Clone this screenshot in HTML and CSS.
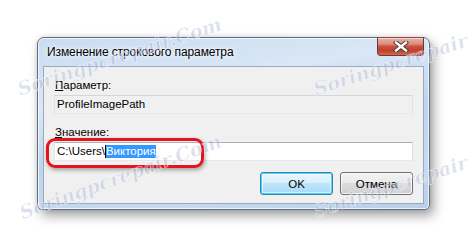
FILE: index.html
```html
<!DOCTYPE html>
<html lang="ru">
<head>
  <meta charset="UTF-8" />
  <title>Изменение строкового параметра</title>
  <link rel="stylesheet" href="styles.css">
</head>
<body>
  <div class="stage">
    <!-- Dialog window -->
    <div class="window">
      <div class="titlebar">
        <span class="title">Изменение строкового параметра</span>
        <div class="close">
          <svg width="16" height="11" viewBox="0 0 16 11">
            <path d="M3 1.5 L13 9.5 M13 1.5 L3 9.5" stroke="#3a3a3a" stroke-width="4.2" stroke-linecap="square"/>
            <path d="M3 1.5 L13 9.5 M13 1.5 L3 9.5" stroke="#ffffff" stroke-width="2.4" stroke-linecap="square"/>
          </svg>
        </div>
      </div>

      <div class="client">
        <div class="label"><u>П</u>араметр:</div>
        <div class="field readonly">ProfileImagePath</div>
        <div class="label second"><u>З</u>начение:</div>
        <div class="field">C:\Users\<span class="caret"></span><span class="sel">Виктория</span></div>
        <div class="buttons">
          <button class="btn default">OK</button>
          <button class="btn">Отмена</button>
        </div>
      </div>
    </div>

    <!-- Annotation -->
    <div class="highlight"></div>

    <!-- Watermarks -->
    <span class="wm wm1">Soringpcrepair.Com</span>
    <span class="wm wm2">Soringpcrepair.c</span>
    <span class="wm wm3">Soringpcrepair.Com</span>
    <span class="wm wm4">Soringpcrepair.c</span>
  </div>
</body>
</html>
```

FILE: styles.css
```css
html, body {
  margin: 0;
  padding: 0;
  background: #ffffff;
  font-family: 'Liberation Sans', Arial, sans-serif;
  color: #000;
}

.stage {
  position: relative;
  width: 468px;
  height: 249px;
  padding: 37px 0 0 37px;
  box-sizing: border-box;
  overflow: hidden;
}

.window {
  width: 393px;
  height: 173px;
  box-sizing: border-box;
  border: 1px solid #5e6f82;
  border-radius: 7px 7px 5px 5px;
  background: linear-gradient(170deg, #c9dcf1 0%, #d9e7f6 30%, #bfd4ec 55%, #c7daef 80%, #b9cfe8 100%);
  box-shadow: inset 0 0 0 1px rgba(255, 255, 255, 0.7), 4px 6px 12px rgba(0, 0, 0, 0.35), 0 0 5px rgba(0, 0, 0, 0.15);
  display: flex;
  flex-direction: column;
}

.titlebar {
  height: 28px;
  display: flex;
  align-items: center;
  padding-left: 9px;
}

.title {
  font-size: 12px;
  text-shadow: 0 0 6px #fff, 0 0 3px #fff;
  letter-spacing: -0.1px;
}

.close {
  margin-left: auto;
  margin-right: 5px;
  align-self: flex-start;
  margin-top: -1px;
  width: 47px;
  height: 19px;
  box-sizing: border-box;
  border: 1px solid #6b3a34;
  border-top-color: #8a4d45;
  border-radius: 0 0 4px 4px;
  background: linear-gradient(to bottom, #eab2a6 0%, #dd8d7e 35%, #c9503d 50%, #c03f2c 75%, #d26a4c 100%);
  box-shadow: inset 0 1px 0 rgba(255, 255, 255, 0.5);
  display: flex;
  align-items: center;
  justify-content: center;
}

.close svg {
  display: block;
}

.client {
  flex: 1;
  margin: 0 5px 5px 5px;
  border: 1px solid #96abc3;
  background: #f0f0f0;
  padding: 11px 10px 0 10px;
  font-size: 11.5px;
}

.label {
  height: 14px;
  line-height: 14px;
  margin-bottom: 3px;
  padding-left: 1px;
}

.label.second {
  margin-top: 11px;
}

.field {
  height: 19px;
  box-sizing: border-box;
  border: 1px solid #abadb3;
  border-color: #abadb3 #dbdfe6 #e3e9ef #e2e3ea;
  background: #ffffff;
  padding-left: 2px;
  line-height: 17px;
  display: flex;
  align-items: center;
  white-space: pre;
}

.field.readonly {
  background: #f0f0f0;
  border-color: #d3d6da #e0e3e6 #e6e8eb #e0e3e6;
}

.caret {
  width: 1px;
  height: 13px;
  background: #000;
}

.sel {
  background: #3399ff;
  color: #fff;
  line-height: 13px;
}

.buttons {
  margin-top: 11px;
  display: flex;
  justify-content: flex-end;
  gap: 7px;
}

.btn {
  width: 73px;
  height: 23px;
  margin: 0;
  padding: 0;
  font-family: inherit;
  font-size: 11.5px;
  color: #000;
  border: 1px solid #707070;
  border-radius: 3px;
  background: linear-gradient(to bottom, #f2f2f2 0%, #ebebeb 45%, #dddddd 50%, #cfcfcf 100%);
  box-shadow: inset 0 0 0 1px rgba(255, 255, 255, 0.75);
}

.btn.default {
  border-color: #3c7fb1;
  background: linear-gradient(to bottom, #eaf6fd 0%, #d9f0fc 45%, #bee6fd 50%, #a7d9f5 100%);
  box-shadow: inset 0 0 0 1px #48d2fd, inset 0 0 0 2px rgba(255, 255, 255, 0.5);
}

.highlight {
  position: absolute;
  left: 46px;
  top: 138px;
  width: 158px;
  height: 30px;
  box-sizing: border-box;
  border: 3px solid #e3141b;
  border-radius: 9px;
  box-shadow: 1px 2px 4px rgba(0, 0, 0, 0.35), inset 0 0 2px rgba(255, 255, 255, 0.9);
  pointer-events: none;
}

.wm {
  position: absolute;
  font-family: 'DejaVu Serif', serif;
  font-style: italic;
  font-weight: bold;
  font-size: 19px;
  color: rgba(150, 165, 205, 0.36);
  -webkit-text-stroke: 0.6px rgba(255, 255, 255, 0.7);
  white-space: nowrap;
  transform: rotate(-18deg);
  transform-origin: left center;
  pointer-events: none;
}

.wm1 { left: 18px; top: 78px; }
.wm2 { left: 314px; top: 78px; }
.wm3 { left: 20px; top: 202px; transform: rotate(-20deg); }
.wm4 { left: 314px; top: 200px; }
```
